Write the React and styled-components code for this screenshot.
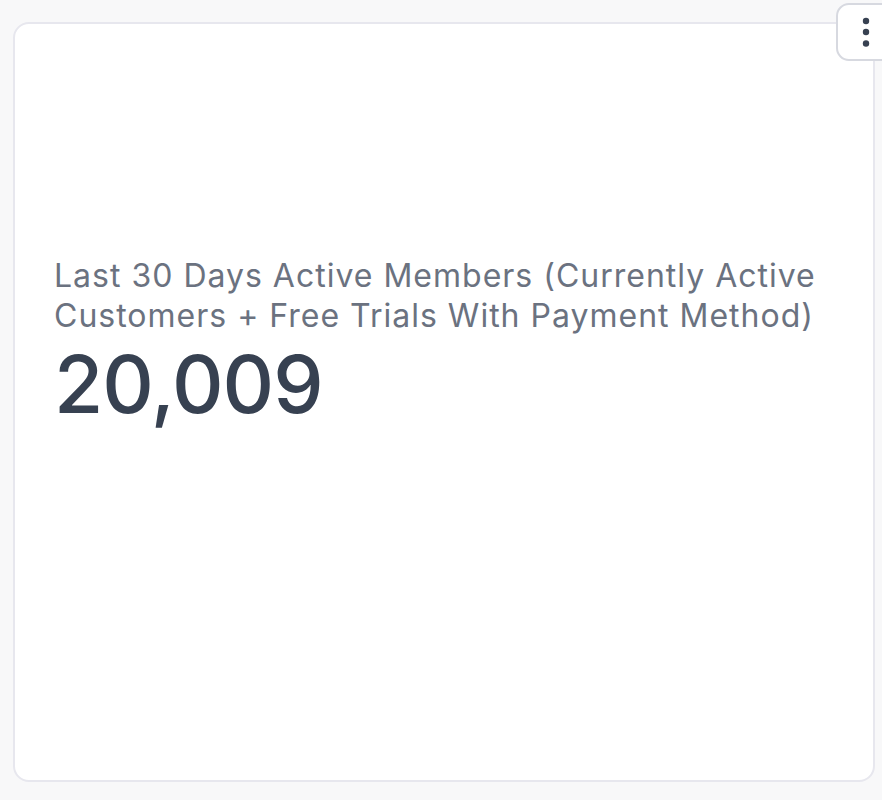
import React from "react";
import styled, { createGlobalStyle } from "styled-components";

const GlobalStyle = createGlobalStyle`
  html, body {
    margin: 0;
    padding: 0;
    background: #f8f8f9;
    font-family: Inter, "Noto Sans", sans-serif;
  }
`;

const Page = styled.div`
  width: 882px;
  height: 800px;
  box-sizing: border-box;
  padding: 22px 7px 20px 13px;
  position: relative;
  overflow: hidden;
`;

const Card = styled.div`
  box-sizing: border-box;
  height: 760px;
  background: #fff;
  border: 2px solid #e7e7ee;
  border-radius: 16px;
  padding: 232px 40px 0 39px;
`;

const Title = styled.div`
  font-size: 32px;
  line-height: 40px;
  color: #6b7280;
  font-weight: 400;
  letter-spacing: 1px;
`;

const Value = styled.div`
  font-size: 80px;
  line-height: 96px;
  color: #374151;
  font-weight: 500;
  letter-spacing: -1px;
`;

const MenuButton = styled.button`
  position: absolute;
  top: 3px;
  left: 836px;
  width: 60px;
  height: 58px;
  box-sizing: border-box;
  background: #fff;
  border: 2px solid #d7d9e0;
  border-radius: 13px;
  padding: 0 0 0 24px;
  display: flex;
  align-items: center;
  justify-content: flex-start;
`;

export default function App() {
  return (
    <>
      <GlobalStyle />
      <Page>
        <Card>
          <Title>
            Last 30 Days Active Members (Currently Active Customers + Free
            Trials With Payment Method)
          </Title>
          <Value>20,009</Value>
        </Card>
        <MenuButton aria-label="More">
          <svg width="8" height="30" viewBox="0 0 8 30">
            <circle cx="4" cy="4" r="3.2" fill="#374151" />
            <circle cx="4" cy="15" r="3.2" fill="#374151" />
            <circle cx="4" cy="26.5" r="3.2" fill="#374151" />
          </svg>
        </MenuButton>
      </Page>
    </>
  );
}
